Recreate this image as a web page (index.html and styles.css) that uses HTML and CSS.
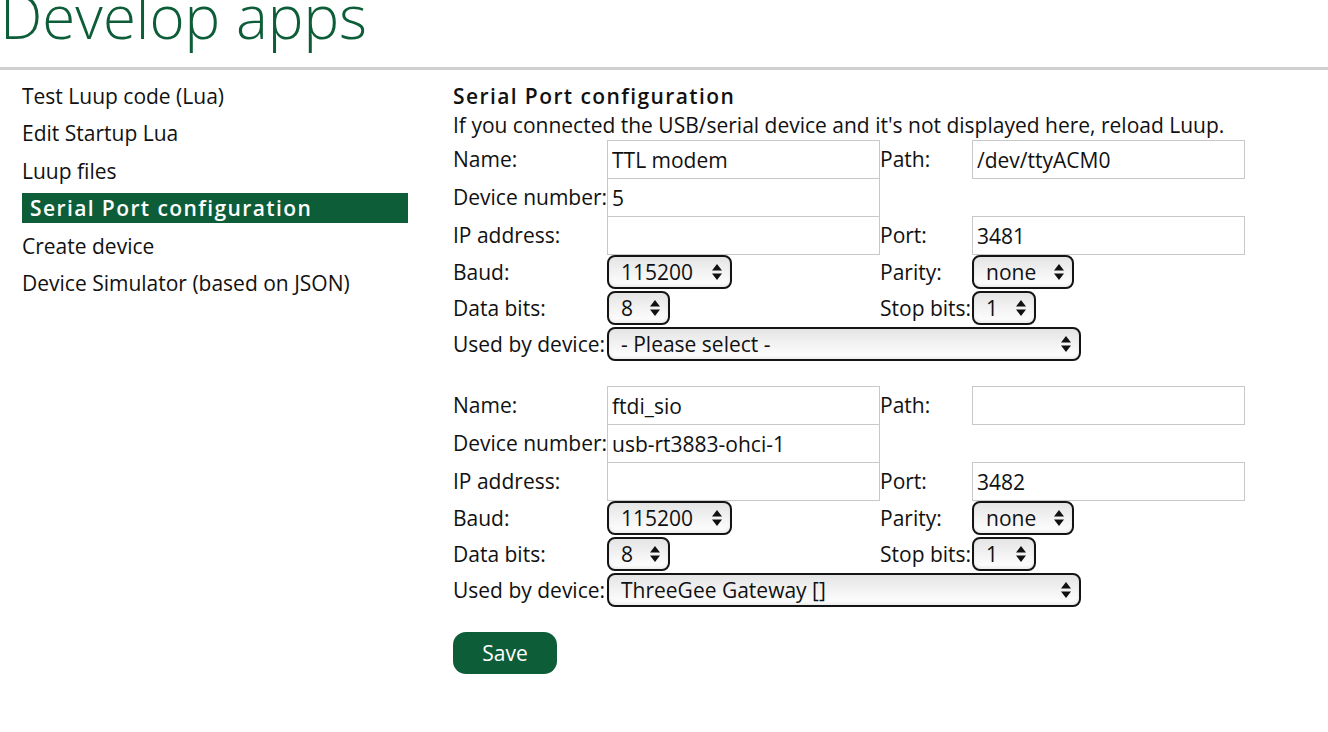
FILE: index.html
```html
<!DOCTYPE html>
<html lang="en">
<head>
<meta charset="utf-8">
<title>Develop apps</title>
<link rel="stylesheet" href="styles.css">
</head>
<body>
<div class="page">
  <header class="header">
    <h1 class="title">Develop apps</h1>
  </header>
  <div class="layout">
    <nav class="sidenav">
      <a class="nav-item">Test Luup code (Lua)</a>
      <a class="nav-item">Edit Startup Lua</a>
      <a class="nav-item">Luup files</a>
      <a class="nav-item active">Serial Port configuration</a>
      <a class="nav-item">Create device</a>
      <a class="nav-item">Device Simulator (based on JSON)</a>
    </nav>
    <main class="content">
      <h2 class="section-title">Serial Port configuration</h2>
      <p class="hint">If you connected the USB/serial device and it's not displayed here, reload Luup.</p>

      <div class="port-grid">
        <div class="label">Name:</div>
        <div class="cell"><input class="text-input" type="text" value="TTL modem"></div>
        <div class="label">Path:</div>
        <div class="cell"><input class="text-input" type="text" value="/dev/ttyACM0"></div>

        <div class="label">Device number:</div>
        <div class="cell"><input class="text-input" type="text" value="5"></div>
        <div class="label"></div>
        <div class="cell"></div>

        <div class="label">IP address:</div>
        <div class="cell"><input class="text-input" type="text" value=""></div>
        <div class="label">Port:</div>
        <div class="cell"><input class="text-input" type="text" value="3481"></div>

        <div class="label sel-row">Baud:</div>
        <div class="cell sel-row"><span class="select-wrap w-baud"><select class="select"><option>115200</option></select><svg class="arrows" viewBox="0 0 10 16" width="10" height="16"><path d="M5 0 L10 6.5 L0 6.5 Z M0 9.5 L10 9.5 L5 16 Z" fill="#111"/></svg></span></div>
        <div class="label sel-row">Parity:</div>
        <div class="cell sel-row"><span class="select-wrap w-parity"><select class="select"><option>none</option></select><svg class="arrows" viewBox="0 0 10 16" width="10" height="16"><path d="M5 0 L10 6.5 L0 6.5 Z M0 9.5 L10 9.5 L5 16 Z" fill="#111"/></svg></span></div>

        <div class="label sel-row">Data bits:</div>
        <div class="cell sel-row"><span class="select-wrap w-bits"><select class="select"><option>8</option></select><svg class="arrows" viewBox="0 0 10 16" width="10" height="16"><path d="M5 0 L10 6.5 L0 6.5 Z M0 9.5 L10 9.5 L5 16 Z" fill="#111"/></svg></span></div>
        <div class="label sel-row">Stop bits:</div>
        <div class="cell sel-row"><span class="select-wrap w-stop"><select class="select"><option>1</option></select><svg class="arrows" viewBox="0 0 10 16" width="10" height="16"><path d="M5 0 L10 6.5 L0 6.5 Z M0 9.5 L10 9.5 L5 16 Z" fill="#111"/></svg></span></div>

        <div class="label sel-row">Used by device:</div>
        <div class="cell sel-row span3"><span class="select-wrap w-device"><select class="select"><option>- Please select -</option></select><svg class="arrows" viewBox="0 0 10 16" width="10" height="16"><path d="M5 0 L10 6.5 L0 6.5 Z M0 9.5 L10 9.5 L5 16 Z" fill="#111"/></svg></span></div>
      </div>

      <div class="port-grid">
        <div class="label">Name:</div>
        <div class="cell"><input class="text-input" type="text" value="ftdi_sio"></div>
        <div class="label">Path:</div>
        <div class="cell"><input class="text-input" type="text" value=""></div>

        <div class="label">Device number:</div>
        <div class="cell"><input class="text-input" type="text" value="usb-rt3883-ohci-1"></div>
        <div class="label"></div>
        <div class="cell"></div>

        <div class="label">IP address:</div>
        <div class="cell"><input class="text-input" type="text" value=""></div>
        <div class="label">Port:</div>
        <div class="cell"><input class="text-input" type="text" value="3482"></div>

        <div class="label sel-row">Baud:</div>
        <div class="cell sel-row"><span class="select-wrap w-baud"><select class="select"><option>115200</option></select><svg class="arrows" viewBox="0 0 10 16" width="10" height="16"><path d="M5 0 L10 6.5 L0 6.5 Z M0 9.5 L10 9.5 L5 16 Z" fill="#111"/></svg></span></div>
        <div class="label sel-row">Parity:</div>
        <div class="cell sel-row"><span class="select-wrap w-parity"><select class="select"><option>none</option></select><svg class="arrows" viewBox="0 0 10 16" width="10" height="16"><path d="M5 0 L10 6.5 L0 6.5 Z M0 9.5 L10 9.5 L5 16 Z" fill="#111"/></svg></span></div>

        <div class="label sel-row">Data bits:</div>
        <div class="cell sel-row"><span class="select-wrap w-bits"><select class="select"><option>8</option></select><svg class="arrows" viewBox="0 0 10 16" width="10" height="16"><path d="M5 0 L10 6.5 L0 6.5 Z M0 9.5 L10 9.5 L5 16 Z" fill="#111"/></svg></span></div>
        <div class="label sel-row">Stop bits:</div>
        <div class="cell sel-row"><span class="select-wrap w-stop"><select class="select"><option>1</option></select><svg class="arrows" viewBox="0 0 10 16" width="10" height="16"><path d="M5 0 L10 6.5 L0 6.5 Z M0 9.5 L10 9.5 L5 16 Z" fill="#111"/></svg></span></div>

        <div class="label sel-row">Used by device:</div>
        <div class="cell sel-row span3"><span class="select-wrap w-device"><select class="select"><option>ThreeGee Gateway []</option></select><svg class="arrows" viewBox="0 0 10 16" width="10" height="16"><path d="M5 0 L10 6.5 L0 6.5 Z M0 9.5 L10 9.5 L5 16 Z" fill="#111"/></svg></span></div>
      </div>

      <button class="save" type="button">Save</button>
    </main>
  </div>
</div>
</body>
</html>
```

FILE: styles.css
```css
* { box-sizing: border-box; }

html, body {
  margin: 0;
  padding: 0;
  background: #ffffff;
}

body {
  font-family: "Open Sans", "Noto Sans", "Liberation Sans", sans-serif;
  font-size: 21px;
  color: #111111;
  overflow: hidden;
}

.header {
  display: flow-root;
  height: 70px;
  border-bottom: 3px solid #d2cfcf;
}

.title {
  margin: -14px 0 0 0;
  font-size: 60px;
  line-height: 60px;
  font-weight: 300;
  color: #0d5e38;
  letter-spacing: 0;
}

.layout {
  display: flex;
  align-items: flex-start;
}

.sidenav {
  width: 408px;
  padding: 11px 0 0 22px;
  display: flex;
  flex-direction: column;
  gap: 7.4px;
  flex-shrink: 0;
}

.nav-item {
  display: block;
  height: 30px;
  line-height: 30px;
  font-size: 21px;
  color: #111111;
  text-decoration: none;
  white-space: nowrap;
}

.nav-item.active {
  background: #0d5e38;
  color: #ffffff;
  font-weight: 600;
  padding-left: 8px;
  letter-spacing: 1.4px;
}

.content {
  margin-left: 45px;
  padding-top: 11px;
}

.section-title {
  margin: 0;
  font-size: 21px;
  line-height: 30px;
  font-weight: 600;
  letter-spacing: 1.4px;
}

.hint {
  margin: 0;
  line-height: 29px;
  white-space: nowrap;
}

.port-grid {
  display: grid;
  grid-template-columns: 154px 273px 92px 273px;
  grid-template-rows: 38px 38px 38px 36px 36px 36px;
  margin-bottom: 24px;
}

.label {
  display: flex;
  align-items: center;
  white-space: nowrap;
  line-height: 1;
}

.cell {
  display: flex;
  align-items: flex-start;
}

.cell.sel-row {
  align-items: center;
}

.span3 {
  grid-column: span 3;
}

.text-input {
  width: 273px;
  height: 39px;
  border: 1px solid #c8c8c8;
  margin: 0;
  padding: 0 4px;
  font-family: inherit;
  font-size: 21px;
  color: #111111;
  background: #ffffff;
  outline: none;
  position: relative;
}

.select-wrap {
  position: relative;
  display: inline-block;
  height: 34px;
}

.select {
  -webkit-appearance: none;
  appearance: none;
  width: 100%;
  height: 34px;
  margin: 0;
  border: 2px solid #141414;
  border-radius: 8px;
  padding: 0 0 0 12px;
  font-family: inherit;
  font-size: 21px;
  color: #111111;
  background: linear-gradient(to bottom, #e4e4e4 0%, #f4f4f4 55%, #ffffff 100%);
  box-shadow: inset 0 -2px 3px rgba(0, 0, 0, 0.08);
  outline: none;
}

.arrows {
  position: absolute;
  right: 10px;
  top: 9px;
  pointer-events: none;
}

.w-baud { width: 125px; }
.w-parity { width: 102px; }
.w-bits { width: 63px; }
.w-stop { width: 64px; }
.w-device { width: 474px; }

.save {
  display: block;
  width: 104px;
  height: 42px;
  border: none;
  border-radius: 13px;
  background: #0d5e38;
  color: #ffffff;
  font-family: inherit;
  font-size: 21px;
  padding: 0;
  cursor: pointer;
}
```
